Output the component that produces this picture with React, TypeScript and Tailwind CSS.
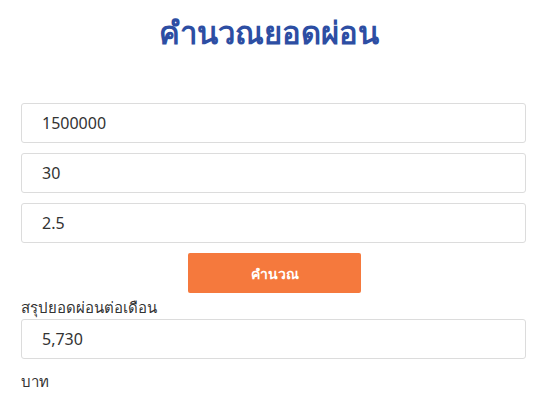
import { useState } from "react";

const fieldClass =
    "h-10 w-full rounded-[3px] border border-[#dcdcdc] bg-white px-5 text-[16px] text-[#333] outline-none";

export default function App() {
    const [amount, setAmount] = useState("1500000");
    const [months, setMonths] = useState("30");
    const [rate, setRate] = useState("2.5");

    return (
        <div className="min-h-[403px] w-[538px] bg-white font-['Noto_Sans','Liberation_Sans',sans-serif]">
            <h1 className="pt-[12px] text-center text-[31px] leading-[40px] font-bold text-[#2d4ea3]">
                คำนวณยอดผ่อน
            </h1>
            <div className="flex flex-col pt-[51px] pr-[12px] pl-[21px]">
                <div className="flex flex-col gap-[10px]">
                    <input
                        className={fieldClass}
                        value={amount}
                        onChange={(e) => setAmount(e.target.value)}
                    />
                    <input
                        className={fieldClass}
                        value={months}
                        autoFocus
                        onChange={(e) => setMonths(e.target.value)}
                    />
                    <input
                        className={fieldClass}
                        value={rate}
                        onChange={(e) => setRate(e.target.value)}
                    />
                </div>
                <div className="flex justify-center pt-[10px]">
                    <button className="ml-[2px] h-10 w-[173px] rounded-[2px] bg-[#f5793d] text-[14px] font-bold text-white">
                        คำนวณ
                    </button>
                </div>
                <div className="pt-[2px] text-[15px] leading-[24px] text-[#333]">
                    สรุปยอดผ่อนต่อเดือน
                </div>
                <input className={fieldClass} value="5,730" readOnly />
                <div className="pt-[10px] text-[15px] leading-[24px] text-[#333]">
                    บาท
                </div>
            </div>
        </div>
    );
}
